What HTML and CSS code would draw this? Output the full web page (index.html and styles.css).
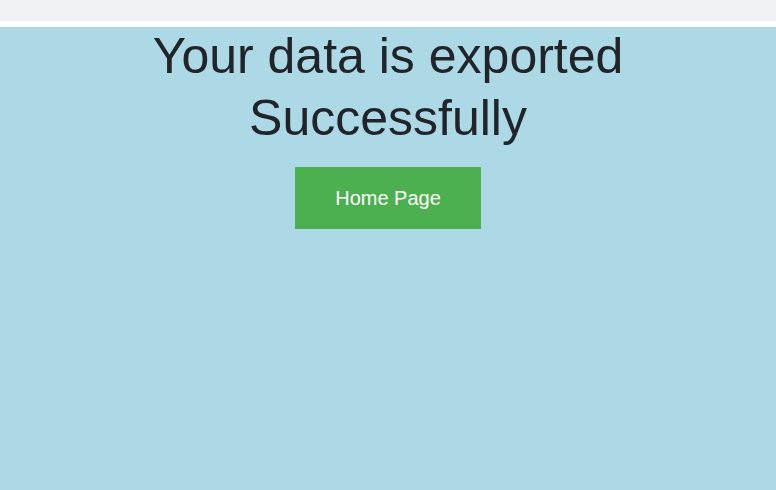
FILE: index.html
```html
<!DOCTYPE html>
<html>
<head>
<meta charset="utf-8">
<link rel="stylesheet" href="styles.css">
</head>
<body>
<div class="topbar"></div>
<div class="divider"></div>
<main class="content">
  <h1 class="title">Your data is exported<br>Successfully</h1>
  <a class="home-btn" href="#">Home Page</a>
</main>
</body>
</html>
```
FILE: styles.css
```css
html, body {
  margin: 0;
  padding: 0;
  height: 100%;
}
body {
  font-family: "Liberation Sans", Arial, sans-serif;
  background: #add8e6;
  color: #212529;
  display: flex;
  flex-direction: column;
}
.topbar {
  height: 21px;
  background: #f1f2f4;
}
.divider {
  height: 6px;
  background: #ffffff;
}
.content {
  flex: 1;
  display: flex;
  flex-direction: column;
  align-items: center;
  background: #add8e6;
}
.title {
  margin: -2px 0 0;
  font-size: 50px;
  font-weight: 400;
  line-height: 62px;
  text-align: center;
}
.home-btn {
  margin-top: 18px;
  display: block;
  width: 186px;
  box-sizing: border-box;
  padding: 20px 0;
  line-height: 22px;
  font-size: 20px;
  text-align: center;
  color: #ffffff;
  background: #4caf50;
  text-decoration: none;
}
```
